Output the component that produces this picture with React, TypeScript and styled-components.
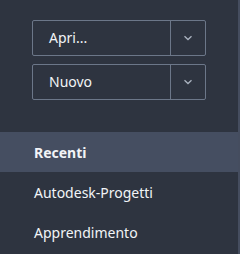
import React from "react";
import styled, { createGlobalStyle } from "styled-components";

const GlobalStyle = createGlobalStyle`
  html, body {
    margin: 0;
    padding: 0;
    background: #2e3440;
  }
  body {
    font-family: "Noto Sans", "Open Sans", sans-serif;
  }
`;

const Sidebar = styled.div`
  width: 240px;
  height: 254px;
  box-sizing: border-box;
  background: #2e3440;
  border-right: 2px solid #454d5f;
  display: flex;
  flex-direction: column;
  padding-top: 20px;
  overflow: hidden;
`;

const Actions = styled.div`
  display: flex;
  flex-direction: column;
  gap: 8px;
  padding-left: 32px;
`;

const SplitButton = styled.div`
  display: flex;
  width: 174px;
  height: 36px;
  box-sizing: border-box;
  border: 1px solid #6c7789;
  border-radius: 2px;
`;

const MainPart = styled.button`
  flex: 1;
  background: transparent;
  border: none;
  border-right: 1px solid #6c7789;
  color: #f2f4f7;
  font-family: inherit;
  font-size: 14px;
  text-align: left;
  padding: 0 0 1px 16px;
  cursor: pointer;
`;

const ArrowPart = styled.button`
  width: 34px;
  background: transparent;
  border: none;
  display: flex;
  align-items: center;
  justify-content: center;
  padding: 0;
  cursor: pointer;
`;

const Nav = styled.nav`
  display: flex;
  flex-direction: column;
  margin-top: 32px;
`;

const NavItem = styled.div<{ $active?: boolean }>`
  height: 40px;
  flex-shrink: 0;
  display: flex;
  align-items: center;
  padding-left: 34px;
  background: ${(p) => (p.$active ? "#454e61" : "transparent")};
  color: #f2f4f7;
  font-size: 14px;
  font-weight: ${(p) => (p.$active ? 700 : 400)};
`;

function Chevron() {
  return (
    <svg width="10" height="6" viewBox="0 0 10 6">
      <path d="M1.5 1.2 L5 4.5 L8.5 1.2" stroke="#aab2bf" strokeWidth="1.3" fill="none" />
    </svg>
  );
}

function Split({ label }: { label: string }) {
  return (
    <SplitButton>
      <MainPart>{label}</MainPart>
      <ArrowPart>
        <Chevron />
      </ArrowPart>
    </SplitButton>
  );
}

export default function App() {
  return (
    <>
      <GlobalStyle />
      <Sidebar>
        <Actions>
          <Split label="Apri..." />
          <Split label="Nuovo" />
        </Actions>
        <Nav>
          <NavItem $active>Recenti</NavItem>
          <NavItem>Autodesk-Progetti</NavItem>
          <NavItem>Apprendimento</NavItem>
        </Nav>
      </Sidebar>
    </>
  );
}
